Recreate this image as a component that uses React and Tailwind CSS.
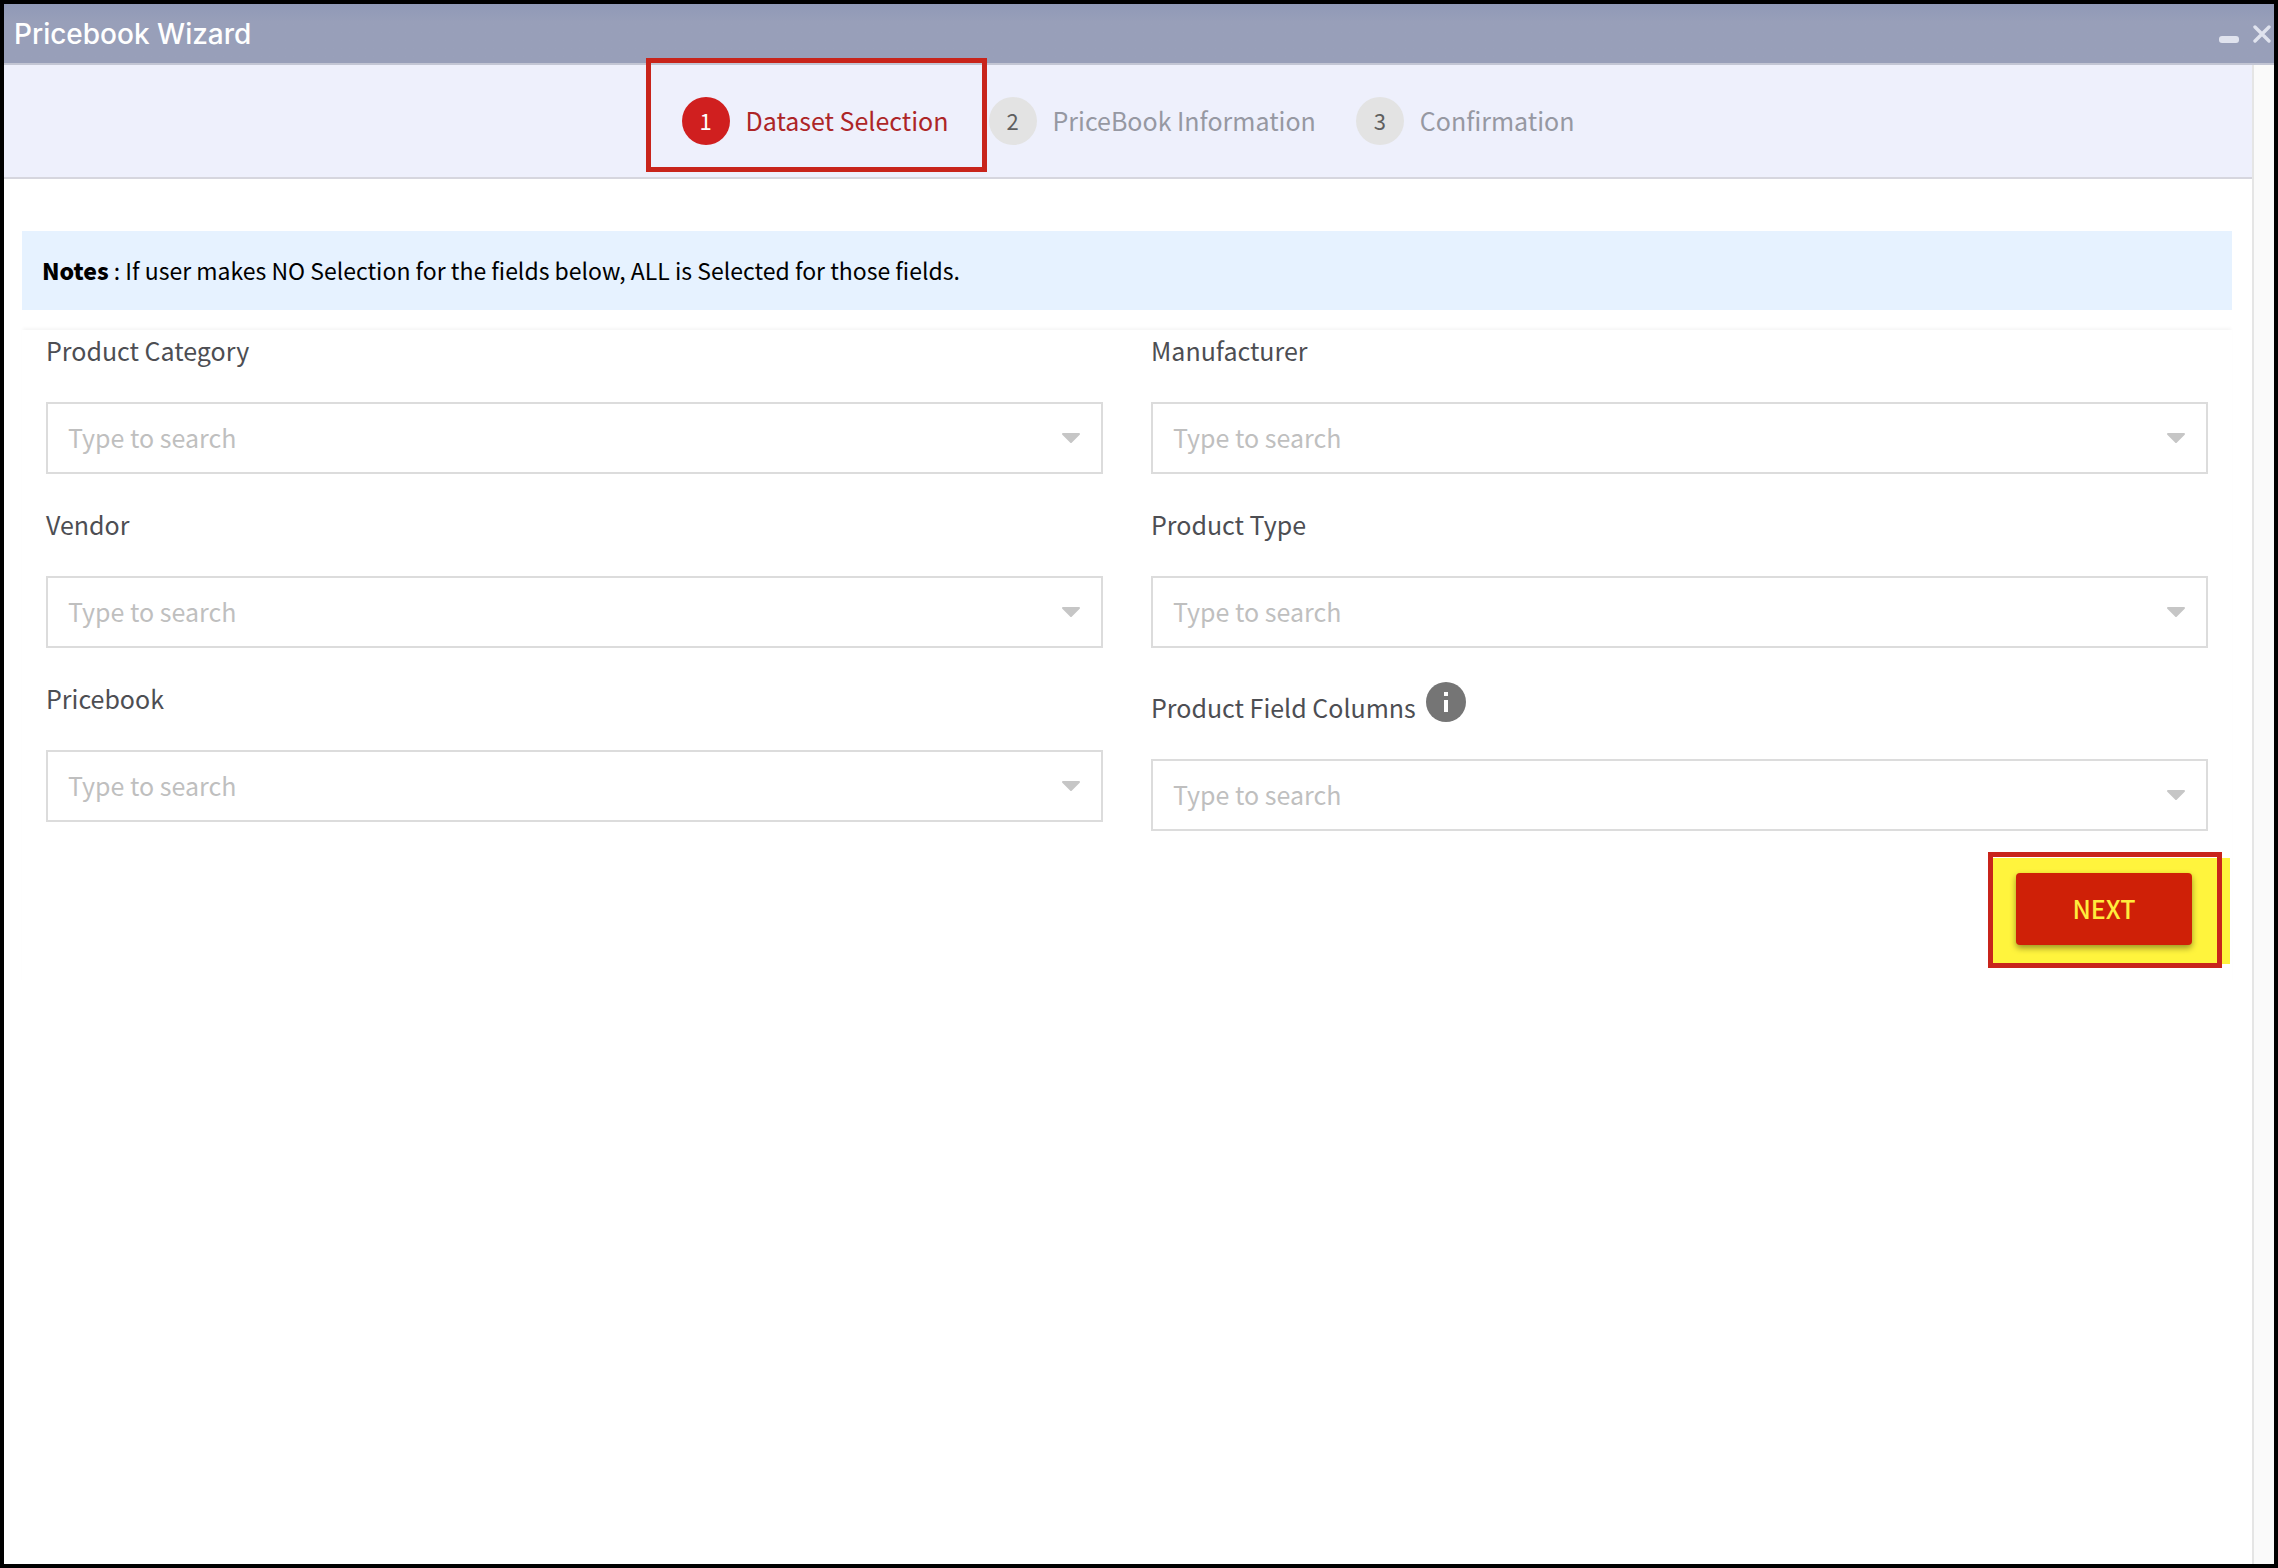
import { useState } from "react";

const STEPS = ["Dataset Selection", "PriceBook Information", "Confirmation"];

const LEFT_FIELDS = [
  { id: "category", label: "Product Category" },
  { id: "vendor", label: "Vendor" },
  { id: "pricebook", label: "Pricebook" },
];

const RIGHT_FIELDS = [
  { id: "manufacturer", label: "Manufacturer" },
  { id: "type", label: "Product Type" },
  { id: "columns", label: "Product Field Columns", info: true },
];

function TitleBar() {
  return (
    <header className="flex h-[61px] items-center justify-between border-b-2 border-[#c3c6d4] bg-linear-to-b from-[#9099b7] from-0% to-[#989fb9] to-30% pl-[10px] pr-[3px]">
      <h1 className="font-['Inter',sans-serif] text-[28px] leading-10 font-medium text-white">Pricebook Wizard</h1>
      <div className="flex items-center gap-[14px] text-[#e0e3ee]">
        <button type="button" aria-label="Minimize" className="flex h-5 w-5 items-end">
          <svg className="h-5 w-5" viewBox="0 0 20 20">
            <rect x="0" y="12" width="20" height="7" rx="3" fill="currentColor" />
          </svg>
        </button>
        <button type="button" aria-label="Close">
          <svg className="h-[18px] w-[18px]" viewBox="0 0 18 18" fill="none" stroke="currentColor" strokeWidth="3.4" strokeLinecap="round">
            <path d="M2 2l14 14M16 2L2 16" />
          </svg>
        </button>
      </div>
    </header>
  );
}

function Stepper({ current }) {
  return (
    <ol className="flex h-[114px] items-center justify-center gap-10 border-b-2 border-[#d6d6de] bg-[#eef0fc]">
      {STEPS.map((name, i) => {
        const active = i === current;
        return (
          <li key={name} className="relative flex items-center gap-4" aria-current={active ? "step" : undefined}>
            <span
              className={`flex h-12 w-12 items-center justify-center rounded-full pb-[2px] text-[22px] leading-8 ${
                active ? "bg-[#d01f1f] text-white" : "bg-[#e3e3e3] text-[#5f5f5f]"
              }`}
            >
              {i + 1}
            </span>
            <span className={`pb-[2px] text-[25px] leading-10 ${active ? "text-[#ad2527]" : "text-[#9698a2]"}`}>{name}</span>
            {active && (
              <span className="pointer-events-none absolute -top-[39px] -right-[38px] -bottom-[27px] -left-9 border-5 border-[#c8241b]" />
            )}
          </li>
        );
      })}
    </ol>
  );
}

function InfoIcon() {
  return (
    <svg className="mt-1 mb-[9px] h-10 w-10" viewBox="0 0 40 40">
      <circle cx="20" cy="20" r="20" fill="#757575" />
      <path d="M18 10h4v4h-4zM18 18h4v12h-4z" fill="#fff" />
    </svg>
  );
}

function SearchField({ id, label, info }) {
  const [value, setValue] = useState("");

  return (
    <div>
      <div className="mb-7 flex items-end gap-[10px]">
        <label htmlFor={id} className="pb-1 text-[25px] leading-10 text-[#4d4e53]">
          {label}
        </label>
        {info && <InfoIcon />}
      </div>
      <div className="flex h-[72px] items-center border-2 border-[#dcdcdc] bg-white">
        <input
          id={id}
          type="text"
          value={value}
          onChange={(e) => setValue(e.target.value)}
          placeholder="Type to search"
          className="h-full min-w-0 flex-1 px-5 pb-[2px] text-[25px] text-[#4d4e53] outline-none placeholder:text-[#bfbfbf]"
        />
        <button type="button" aria-label={`Show ${label} options`} className="flex h-full w-[60px] items-center justify-center">
          <svg className="h-[10px] w-[18px]" viewBox="0 0 18 10">
            <path d="M1 0h16a1 1 0 0 1 .7 1.7L9.7 9.7a1 1 0 0 1-1.4 0L.3 1.7A1 1 0 0 1 1 0z" fill="#c6c6c6" />
          </svg>
        </button>
      </div>
    </div>
  );
}

export default function App() {
  const [step, setStep] = useState(0);
  const next = () => setStep((s) => Math.min(s + 1, STEPS.length - 1));

  return (
    <div className="flex min-h-screen flex-col border-4 border-black bg-white font-['Noto_Sans_CJK_SC',sans-serif]">
      <TitleBar />
      <div className="flex flex-1">
        <main className="flex-1">
          <Stepper current={step} />
          <div className="pt-[52px] pr-5 pl-[18px]">
            <p className="bg-[#e6f2ff] px-5 py-5 text-[23px] leading-[39px] text-black">
              <b className="font-black">Notes</b> : If user makes NO Selection for the fields below, ALL is Selected for those fields.
            </p>
            {/* Form card */}
            <form className="mt-5 pr-6 pb-5 pl-6 shadow-[0_-3px_3px_-1px_rgba(0,0,0,0.04)]" onSubmit={(e) => e.preventDefault()}>
              <div className="flex gap-12">
                <div className="flex flex-1 flex-col gap-[30px]">
                  {LEFT_FIELDS.map((f) => (
                    <SearchField key={f.id} {...f} />
                  ))}
                </div>
                <div className="flex flex-1 flex-col gap-[30px]">
                  {RIGHT_FIELDS.map((f) => (
                    <SearchField key={f.id} {...f} />
                  ))}
                </div>
              </div>
              <div className="mt-[27px] -mr-[22px] flex justify-end">
                <div className="relative bg-[#fff43d] pt-[15px] pr-[38px] pb-[19px] pl-6">
                  <button
                    type="button"
                    onClick={next}
                    className="h-[72px] w-44 rounded-sm bg-[#cf2007] text-[25px] font-medium text-[#ffec3d] shadow-[0_3px_6px_rgba(0,0,0,0.4)]"
                  >
                    NEXT
                  </button>
                  <span className="pointer-events-none absolute -top-[6px] right-2 -bottom-1 -left-1 border-5 border-[#c8241b]" />
                </div>
              </div>
            </form>
          </div>
        </main>
        {/* Scrollbar track */}
        <div className="w-[22px] border-l-2 border-[#e5e5e5] bg-[#fafafa]" />
      </div>
    </div>
  );
}
